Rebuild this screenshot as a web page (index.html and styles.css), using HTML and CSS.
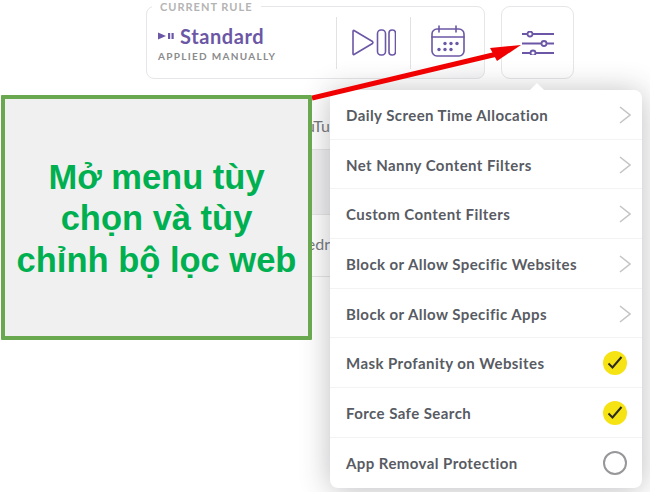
FILE: index.html
```html
<!DOCTYPE html>
<html lang="en">
<head>
    <meta charset="UTF-8">
    <meta name="viewport" content="width=device-width, initial-scale=1.0">
    <title>Net Nanny</title>
    <link rel="stylesheet" href="styles.css">
</head>
<body>
    <div class="top-bar">
        <div class="rule-card">
            <span class="rule-legend">CURRENT RULE</span>
            <div class="rule-info">
                <div class="rule-name">
                    <svg class="rule-mini" width="16" height="8" viewBox="0 0 16 8"><path d="M0 0.500 L8 4 L0 7.500 Z" fill="#6b57a5"/><rect x="10" y="1" width="2.200" height="6" fill="#6b57a5"/><rect x="13.500" y="1" width="2.200" height="6" fill="#6b57a5"/></svg>
                    Standard
                </div>
                <div class="rule-sub">APPLIED MANUALLY</div>
            </div>
            <div class="rule-action">
                <svg width="44" height="27" viewBox="0 0 44 27" fill="none" stroke="#6b57a5" stroke-width="1.600" stroke-linejoin="round"><path d="M2 1.500 L20.500 12.500 Q21.500 13.500 20.500 14.500 L2 25.500 Q1 26 1 24.500 V2.500 Q1 1 2 1.500 Z"/><rect x="25.500" y="1" width="8" height="25" rx="3.500"/><rect x="37" y="1" width="6.500" height="25" rx="3"/></svg>
            </div>
            <div class="rule-action">
                <svg class="calendar" width="34" height="32" viewBox="0 0 34 32" fill="none" stroke="#6b57a5" stroke-width="1.600"><rect x="1" y="4" width="32" height="27" rx="5"/><path d="M1 12 H33 M8 1 V7 M25 1 V7" stroke-linecap="round"/><g fill="#6b57a5" stroke="none"><circle cx="14" cy="18.500" r="1.700"/><circle cx="20" cy="18.500" r="1.700"/><circle cx="26" cy="18.500" r="1.700"/><circle cx="8" cy="24.500" r="1.700"/><circle cx="14" cy="24.500" r="1.700"/><circle cx="20" cy="24.500" r="1.700"/></g></svg>
            </div>
        </div>
        <div class="filter-btn">
            <svg width="32" height="24" viewBox="0 0 32 24" fill="none" stroke="#6b57a5" stroke-width="1.800"><path d="M0 3 H5.500 M10.500 3 H32 M0 12.500 H19.500 M24.500 12.500 H32 M0 22 H8.500 M13.500 22 H32"/><circle cx="8" cy="3" r="2.500"/><circle cx="22" cy="12.500" r="2.500"/><circle cx="11" cy="22" r="2.500"/></svg>
        </div>
    </div>

    <!-- bits of the page behind the menu -->
    <div class="behind">
        <div class="behind-row behind-top"><span>uTu</span></div>
        <div class="behind-band"></div>
        <div class="behind-row behind-bottom"><span>edr</span></div>
    </div>

    <ul class="menu">
        <li class="menu-item">Daily Screen Time Allocation <svg class="chev" width="12" height="18" viewBox="0 0 12 18"><path d="M1 1 L11 9 L1 17"/></svg></li>
        <li class="menu-item">Net Nanny Content Filters <svg class="chev" width="12" height="18" viewBox="0 0 12 18"><path d="M1 1 L11 9 L1 17"/></svg></li>
        <li class="menu-item">Custom Content Filters <svg class="chev" width="12" height="18" viewBox="0 0 12 18"><path d="M1 1 L11 9 L1 17"/></svg></li>
        <li class="menu-item">Block or Allow Specific Websites <svg class="chev" width="12" height="18" viewBox="0 0 12 18"><path d="M1 1 L11 9 L1 17"/></svg></li>
        <li class="menu-item">Block or Allow Specific Apps <svg class="chev" width="12" height="18" viewBox="0 0 12 18"><path d="M1 1 L11 9 L1 17"/></svg></li>
        <li class="menu-item">Mask Profanity on Websites <span class="tick"><svg width="16" height="14" viewBox="0 0 16 14" fill="none" stroke="#2b2b20" stroke-width="2"><path d="M1.500 7.500 L5.500 11.500 L14.500 1"/></svg></span></li>
        <li class="menu-item">Force Safe Search <span class="tick"><svg width="16" height="14" viewBox="0 0 16 14" fill="none" stroke="#2b2b20" stroke-width="2"><path d="M1.500 7.500 L5.500 11.500 L14.500 1"/></svg></span></li>
        <li class="menu-item">App Removal Protection <span class="tick-off"></span></li>
    </ul>

    <svg class="arrow" width="240" height="60" viewBox="0 0 240 60"><path d="M0 56 L185 12" stroke="#f00000" stroke-width="5"/><path d="M178 6 L209 3 L185 19 Z" fill="#f00000"/></svg>

    <div class="callout">Mở menu tùy<br>chọn và tùy<br>chỉnh bộ lọc web</div>
</body>
</html>
```

FILE: styles.css
```css
body {
    margin: 0;
    width: 650px;
    height: 492px;
    overflow: hidden;
    position: relative;
    background-color: #fff;
    font-family: "Lato", "Noto Sans", sans-serif;
    color: #4a4d55;
}

.top-bar {
    display: flex;
    align-items: flex-start;
    gap: 16px;
    padding: 6px 0 0 146px;
}

.rule-card {
    position: relative;
    width: 339px;
    height: 73px;
    box-sizing: border-box;
    display: flex;
    align-items: center;
    border: 1px solid #e6e6e8;
    border-radius: 8px;
    background: linear-gradient(170deg, #fff 80%, #f4f4f5);
}

.rule-legend {
    position: absolute;
    top: -7px;
    left: 5px;
    padding: 0 8px;
    background-color: #fff;
    font-size: 11px;
    font-weight: 700;
    letter-spacing: 1px;
    color: #b4b4b4;
}

.rule-info {
    width: 189px;
    padding: 1px 0 0 11px;
    box-sizing: border-box;
}

.rule-name {
    display: flex;
    align-items: center;
    gap: 6px;
    font-size: 20px;
    font-weight: 700;
    letter-spacing: 0.600px;
    color: #6b57a5;
}

.rule-sub {
    margin-top: 2px;
    font-size: 10px;
    font-weight: 700;
    letter-spacing: 1.300px;
    color: #8b8b8d;
}

.rule-action {
    display: flex;
    align-items: center;
    justify-content: center;
    height: 52px;
    border-left: 1px solid #e2e2e4;
    width: 73px;
}

.calendar {
    margin-bottom: 3px;
}

.filter-btn {
    display: flex;
    align-items: center;
    justify-content: center;
    width: 73px;
    height: 73px;
    box-sizing: border-box;
    border: 1px solid #e6e6e8;
    border-radius: 9px;
}

.behind {
    position: absolute;
    top: 113px;
    left: 290px;
    width: 40px;
    display: flex;
    flex-direction: column;
    font-size: 16px;
    color: #77797d;
}

.behind-row {
    display: flex;
    align-items: center;
    justify-content: flex-end;
    box-sizing: border-box;
    white-space: nowrap;
}

.behind-top {
    height: 36px;
    padding-bottom: 12px;
}

.behind-band {
    height: 66px;
    background-color: #f1f1f2;
    border-top: 1px solid #e6e6e6;
    border-bottom: 1px solid #e6e6e6;
    box-sizing: border-box;
}

.behind-bottom {
    height: 62px;
    padding-bottom: 4px;
    border-bottom: 1px solid #e6e6e6;
}

.menu {
    position: absolute;
    top: 90px;
    left: 330px;
    width: 312px;
    margin: 0;
    padding: 0;
    list-style: none;
    background-color: #fff;
    border-radius: 8px;
    box-shadow: 0 2px 30px rgba(50, 50, 60, 0.32);
}

.menu::before {
    content: "";
    position: absolute;
    top: -5px;
    left: 202px;
    width: 10px;
    height: 10px;
    background-color: #fff;
    transform: rotate(45deg);
}

.menu-item {
    position: relative;
    display: flex;
    align-items: center;
    justify-content: space-between;
    height: 49.700px;
    padding: 1px 11px 0 16px;
    border-bottom: 1px solid #f3f3f4;
    box-sizing: border-box;
    font-size: 15px;
    font-weight: 700;
    letter-spacing: 0.430px;
    color: #585b63;
}

.menu-item:last-child {
    border-bottom: none;
}

.chev {
    fill: none;
    stroke: #c4c4c6;
    stroke-width: 1.600;
}

.tick {
    display: flex;
    align-items: center;
    justify-content: center;
    width: 24px;
    height: 24px;
    margin-right: 4px;
    border-radius: 50%;
    background-color: #f5e313;
}

.tick-off {
    width: 20px;
    height: 20px;
    margin-right: 4px;
    border: 2px solid #97979a;
    border-radius: 50%;
}

.arrow {
    position: absolute;
    top: 42px;
    left: 312px;
}

.callout {
    position: absolute;
    top: 95px;
    left: 1px;
    width: 311px;
    height: 245px;
    box-sizing: border-box;
    display: flex;
    align-items: center;
    justify-content: center;
    padding-top: 3px;
    text-align: center;
    white-space: nowrap;
    background-color: #f0f0f1;
    border: 4px solid #6aa84f;
    border-radius: 1px;
    font-family: "Liberation Sans", Arial, sans-serif;
    font-size: 34.500px;
    line-height: 41.500px;
    font-weight: 700;
    color: #00b050;
}
```
